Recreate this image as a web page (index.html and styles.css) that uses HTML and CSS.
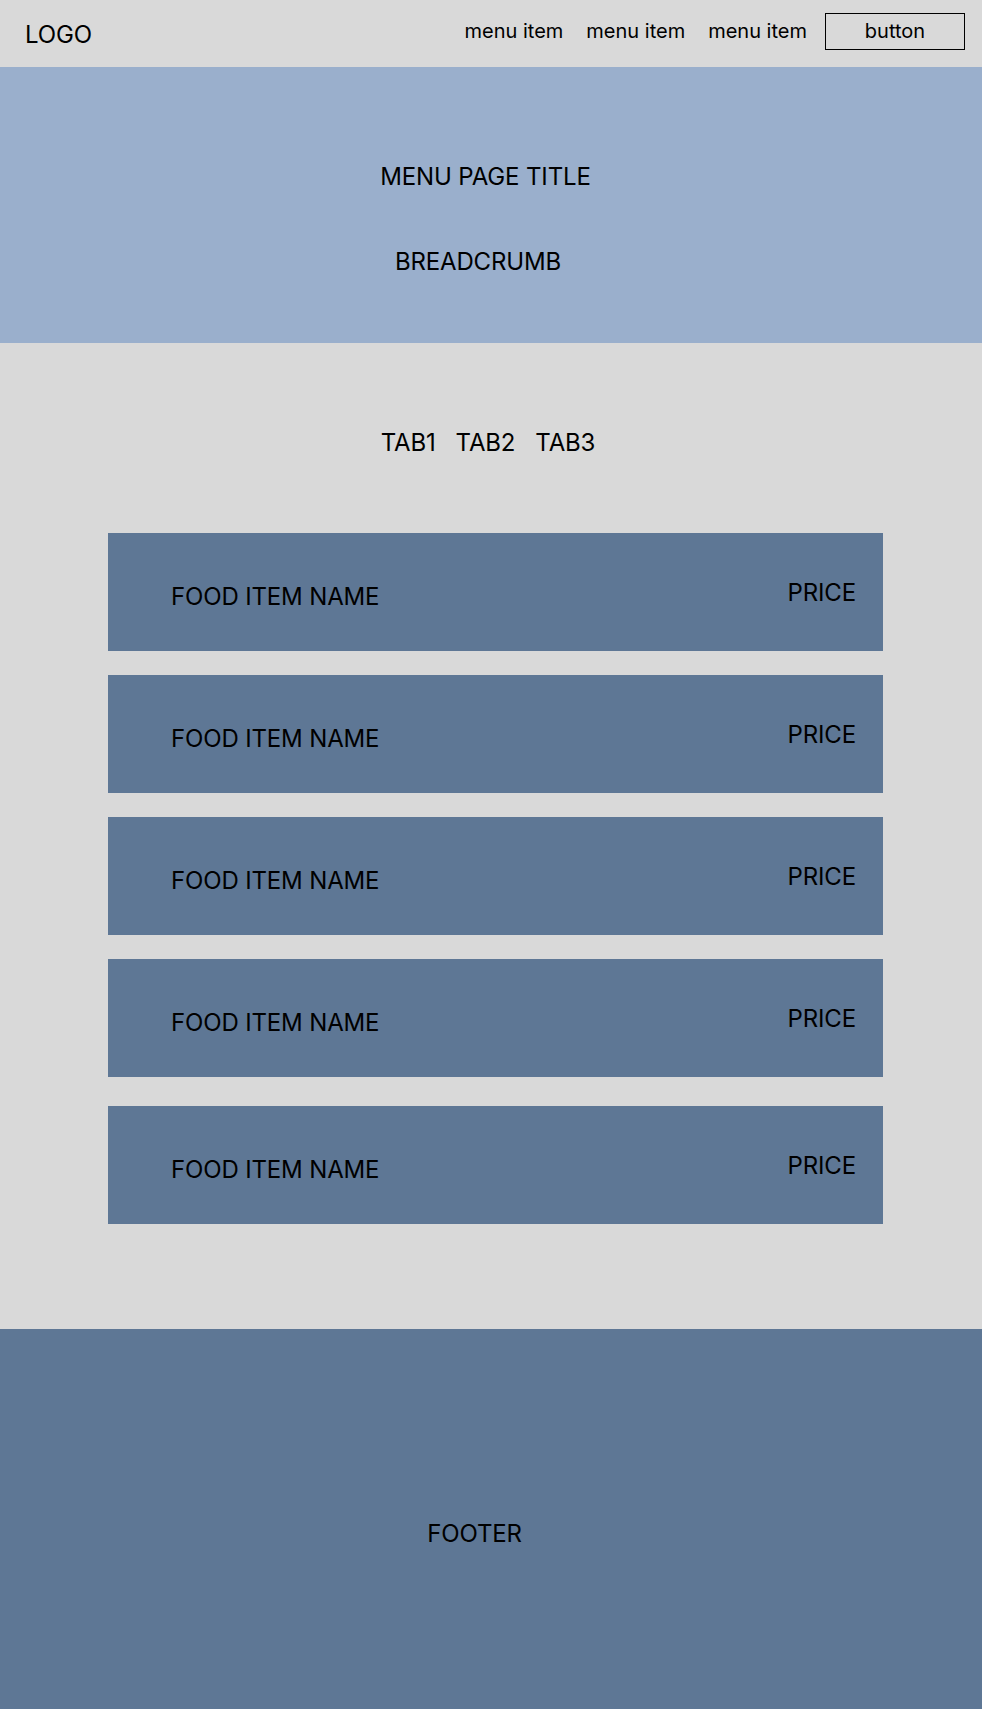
FILE: index.html
```html
<!DOCTYPE html>
<html lang="en">
<head>
<meta charset="utf-8">
<title>Menu</title>
<link rel="stylesheet" href="styles.css">
</head>
<body>
<header class="site-header">
  <div class="logo">LOGO</div>
  <nav class="nav">
    <a class="nav-link" href="#">menu item</a>
    <a class="nav-link" href="#">menu item</a>
    <a class="nav-link" href="#">menu item</a>
    <button class="nav-button" type="button">button</button>
  </nav>
</header>

<section class="hero">
  <h1 class="hero-title">MENU PAGE TITLE</h1>
  <p class="hero-breadcrumb">BREADCRUMB</p>
</section>

<main class="menu">
  <div class="tabs">
    <span class="tab">TAB1</span>
    <span class="tab">TAB2</span>
    <span class="tab">TAB3</span>
  </div>
  <ul class="items">
    <li class="item"><span class="item-name">FOOD ITEM NAME</span><span class="item-price">PRICE</span></li>
    <li class="item"><span class="item-name">FOOD ITEM NAME</span><span class="item-price">PRICE</span></li>
    <li class="item"><span class="item-name">FOOD ITEM NAME</span><span class="item-price">PRICE</span></li>
    <li class="item"><span class="item-name">FOOD ITEM NAME</span><span class="item-price">PRICE</span></li>
    <li class="item"><span class="item-name">FOOD ITEM NAME</span><span class="item-price">PRICE</span></li>
  </ul>
</main>

<footer class="site-footer">
  <p class="footer-text">FOOTER</p>
</footer>
</body>
</html>
```

FILE: styles.css
```css
* {
  box-sizing: border-box;
}

html, body {
  margin: 0;
  padding: 0;
}

body {
  font-family: Inter, "Noto Sans", sans-serif;
  font-weight: 400;
  color: #000;
  background: #d9d9d9;
  letter-spacing: -0.15px;
}

.site-header {
  height: 67px;
  display: flex;
  align-items: center;
  justify-content: space-between;
  padding: 0 17px 0 25px;
  background: #d9d9d9;
}

.logo {
  font-size: 24px;
  line-height: 29px;
  margin-top: 2px;
}

.nav {
  display: flex;
  align-items: center;
  margin-bottom: 5px;
}

.nav-link {
  font-size: 20px;
  line-height: 24px;
  color: #000;
  text-decoration: none;
  margin-right: 23px;
  letter-spacing: 0;
}

.nav-link:last-of-type {
  margin-right: 18px;
}

.nav-button {
  width: 140px;
  height: 37px;
  border: 1px solid #000;
  background: transparent;
  font-family: inherit;
  font-size: 20px;
  letter-spacing: 0;
  color: #000;
  padding: 0;
}

.hero {
  height: 276px;
  background: #9aafcc;
  display: flex;
  flex-direction: column;
  align-items: center;
  padding-top: 95px;
}

.hero-title {
  margin: 0 11px 0 0;
  font-size: 24px;
  font-weight: 400;
  line-height: 29px;
}

.hero-breadcrumb {
  margin: 56px 26px 0 0;
  font-size: 24px;
  line-height: 29px;
}

.menu {
  padding: 85px 0 105px;
}

.tabs {
  display: flex;
  justify-content: center;
  gap: 20px;
  font-size: 24px;
  line-height: 29px;
  margin-right: 6px;
}

.items {
  list-style: none;
  margin: 76px 0 0 108px;
  padding: 0;
  width: 775px;
  display: flex;
  flex-direction: column;
  gap: 24px;
}

.item {
  height: 118px;
  background: #5e7795;
  display: flex;
  align-items: center;
  justify-content: space-between;
  padding: 0 27px 0 63px;
  font-size: 24px;
  line-height: 29px;
}

.item:last-child {
  margin-top: 5px;
}

.item-name {
  margin-top: 9px;
}

.site-footer {
  height: 380px;
  background: #5e7795;
  display: flex;
  justify-content: center;
  padding-top: 190px;
}

.footer-text {
  margin: 0 33px 0 0;
  font-size: 24px;
  line-height: 29px;
}
```
